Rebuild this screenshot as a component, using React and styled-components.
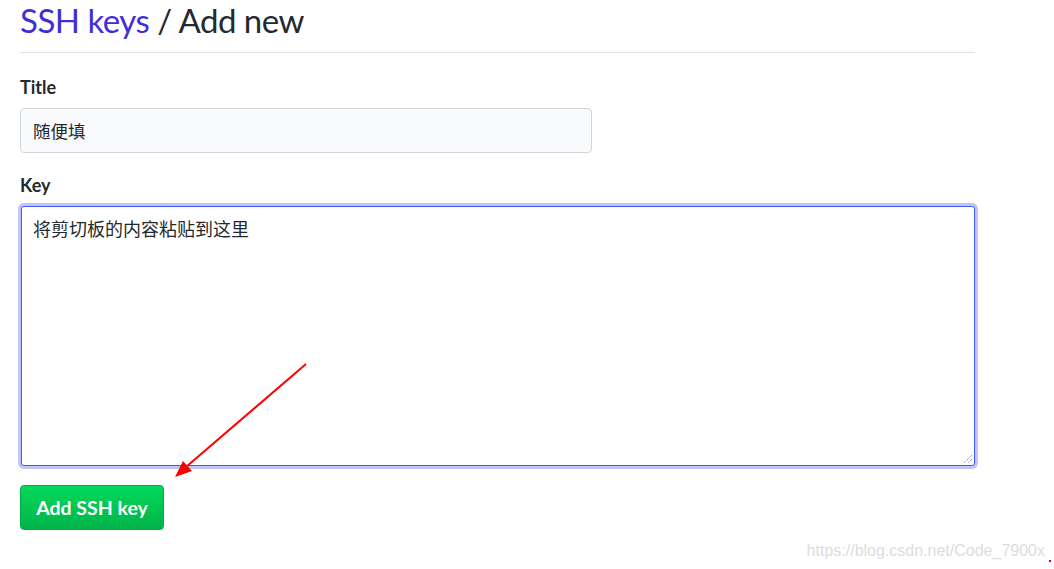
import React from 'react';
import styled, { createGlobalStyle } from 'styled-components';

const GlobalStyle = createGlobalStyle`
  html, body {
    margin: 0;
    padding: 0;
    background: #fff;
  }
  body {
    font-family: Lato, "Noto Sans CJK SC", sans-serif;
    color: #24292e;
  }
`;

const Page = styled.div`
  position: relative;
  width: 1054px;
  height: 569px;
  padding: 0 79px 0 20px;
  box-sizing: border-box;
  overflow: hidden;
`;

const Header = styled.h2`
  margin: 0;
  padding: 0 0 9px;
  height: 43px;
  font-size: 33px;
  line-height: 41px;
  letter-spacing: -0.5px;
  font-weight: 400;
  border-bottom: 1px solid #e1e4e8;
  color: #24292e;
`;

const Crumb = styled.span`
  color: #3f2fd8;
`;

const Form = styled.form`
  display: flex;
  flex-direction: column;
  padding-top: 23px;
`;

const Label = styled.label`
  display: block;
  font-size: 18px;
  font-weight: 700;
  line-height: 22px;
  margin-bottom: 10px;
`;

const Group = styled.div`
  margin-bottom: ${(p) => p.$gap || 21}px;
`;

const TextInput = styled.div`
  width: 572px;
  height: 45px;
  box-sizing: border-box;
  padding: 0 12px;
  display: flex;
  align-items: center;
  background: #f9fafc;
  border: 1px solid #d1d5da;
  border-radius: 4px;
  font-family: "Noto Sans CJK SC", sans-serif;
  font-size: 17.5px;
  color: #24292e;
`;

const KeyArea = styled.div`
  position: relative;
  margin: 2px 0 0 1px;
  height: 260px;
  box-sizing: border-box;
  padding: 9px 11px;
  background: #fff;
  border: 1px solid #3d5afe;
  border-radius: 3px;
  box-shadow: 0 0 0 3px #c3c3f7;
  font-family: "Noto Sans CJK SC", sans-serif;
  font-size: 18px;
  line-height: 24px;
  color: #24292e;
`;

const Grip = styled.svg`
  position: absolute;
  right: 1px;
  bottom: 1px;
`;

const SubmitButton = styled.button`
  align-self: flex-start;
  width: 144px;
  height: 45px;
  border: 1px solid #06a845;
  border-radius: 4px;
  background: linear-gradient(#03d95b, #01b34a);
  color: #fff;
  font-family: Lato, sans-serif;
  font-size: 19.5px;
  font-weight: 700;
  cursor: pointer;
`;

const Arrow = styled.svg`
  position: absolute;
  left: 0;
  top: 0;
  pointer-events: none;
`;

const Watermark = styled.div`
  position: absolute;
  right: 9px;
  bottom: 9px;
  font-family: "Liberation Sans", Arial, sans-serif;
  font-size: 16px;
  color: #dcdcdc;
`;

const Dot = styled.span`
  position: absolute;
  right: 3px;
  bottom: 7px;
  width: 2px;
  height: 2px;
  background: #e00;
`;

export default function App() {
  return (
    <>
      <GlobalStyle />
      <Page>
        <Header>
          <Crumb>SSH keys</Crumb> / Add new
        </Header>
        <Form>
          <Group>
            <Label>Title</Label>
            <TextInput>随便填</TextInput>
          </Group>
          <Group $gap={19}>
            <Label>Key</Label>
            <KeyArea>
              将剪切板的内容粘贴到这里
              <Grip width="12" height="12" viewBox="0 0 12 12">
                <path d="M11 3 L3 11 M11 7 L7 11" stroke="#777" strokeWidth="1" strokeDasharray="1 1" />
              </Grip>
            </KeyArea>
          </Group>
          <SubmitButton type="button">Add SSH key</SubmitButton>
        </Form>
        <Arrow width="1054" height="569">
          <line x1="306" y1="364" x2="186" y2="467" stroke="#f00" strokeWidth="2" />
          <polygon points="175,477 183,461 192,471" fill="#f00" />
        </Arrow>
        <Watermark>https://blog.csdn.net/Code_7900x</Watermark>
        <Dot />
      </Page>
    </>
  );
}
